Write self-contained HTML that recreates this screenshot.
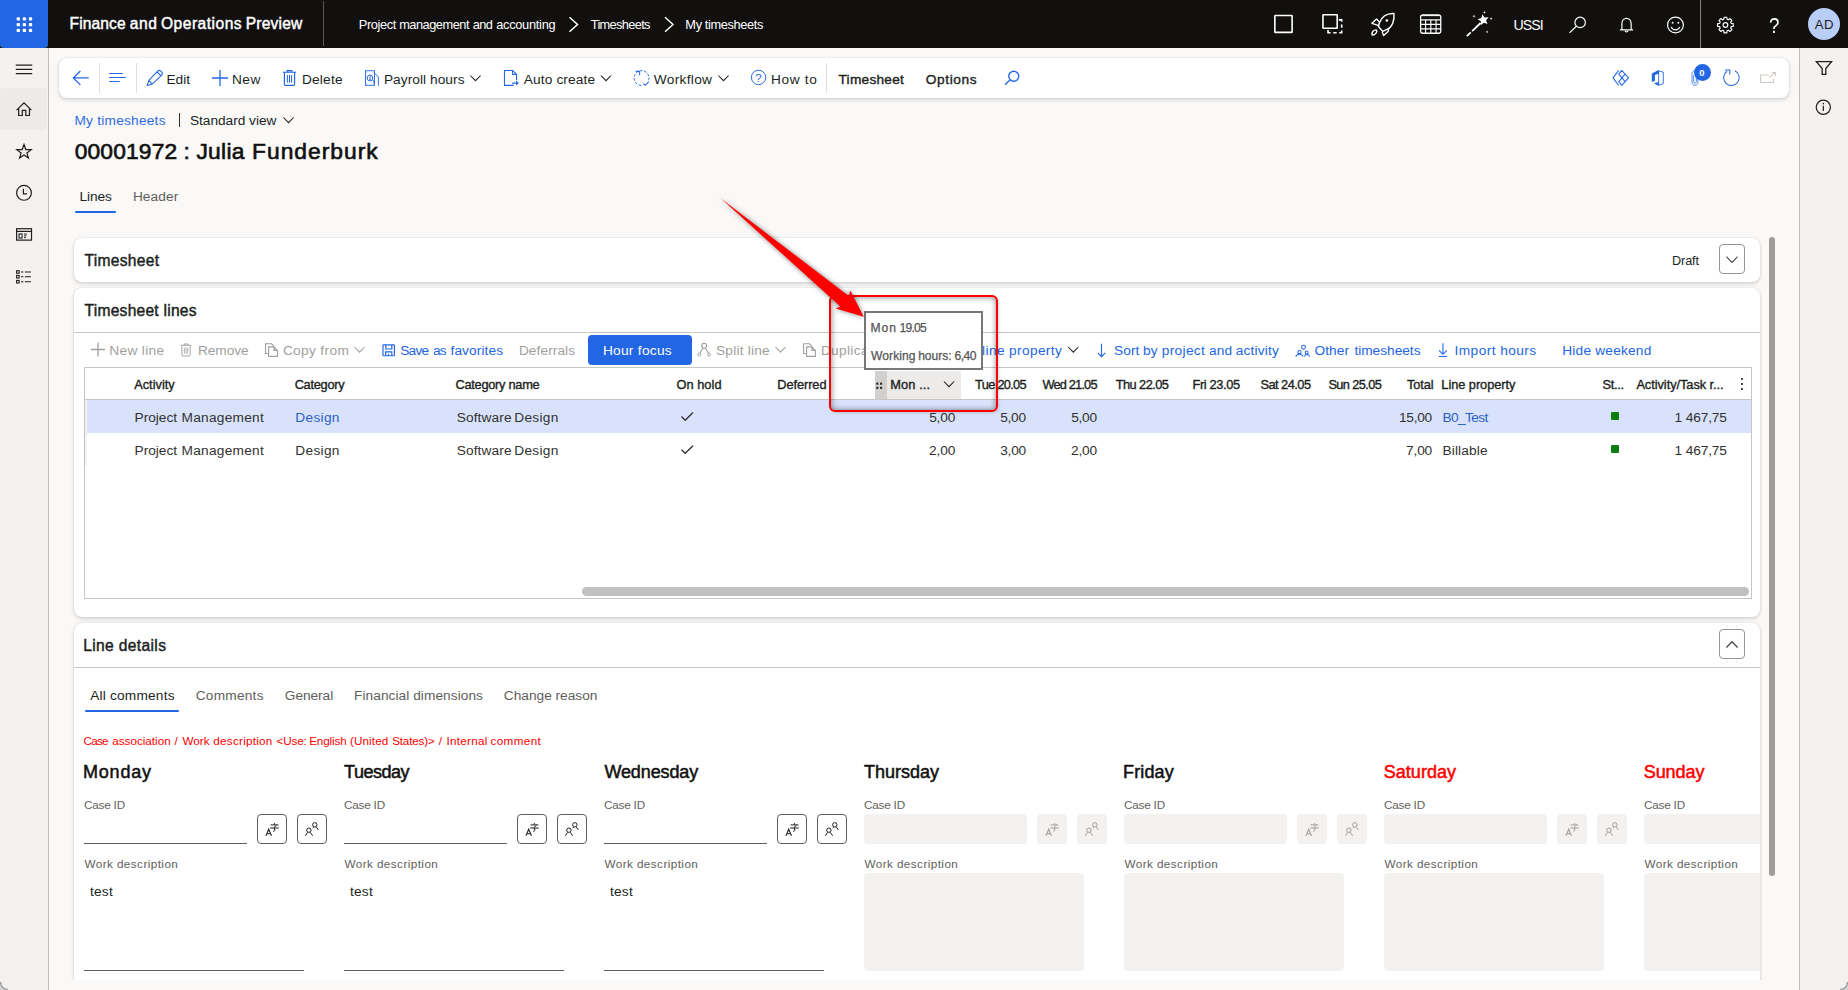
<!DOCTYPE html>
<html lang="en">
<head>
<meta charset="utf-8">
<title>My timesheets - Finance and Operations Preview</title>
<style>
html,body{margin:0;padding:0}
body{width:1848px;height:990px;position:relative;overflow:hidden;background:#faf9f8;font-family:"Liberation Sans",sans-serif;color:#201f1e}
.t{position:absolute;white-space:pre;line-height:normal;margin:0;padding:0;font-weight:400}
.b{position:absolute;box-sizing:border-box}
svg{position:absolute;overflow:visible}
.card{position:absolute;background:#fff;border-radius:8px;box-shadow:0 0 2px rgba(0,0,0,.12),0 2px 4px rgba(0,0,0,.14)}
.w{display:contents;margin:0;padding:0}
.w7{font-weight:700}
.q{transform:scaleX(.86);transform-origin:0 0}
.tt{-webkit-text-stroke:0.25px #555}
h1,h2,h3,p,ul,li,button,a{font:inherit;color:inherit;text-decoration:none}
</style>
</head>
<body>
<header>
<div class="b" style="left:0px;top:0px;width:1848px;height:48px;background:#11100f"></div>
<div class="b" style="left:0px;top:0px;width:48px;height:48px;background:#2266e3;border-radius:0 0 4px 4px"></div>
<svg style="left:0px;top:0px;" width="48" height="48" viewBox="0 0 48 48" fill="none"><rect x="16.65" y="17.25" width="3.3" height="3.3" rx="0.9" fill="#fff"/><rect x="22.75" y="17.25" width="3.3" height="3.3" rx="0.9" fill="#fff"/><rect x="28.85" y="17.25" width="3.3" height="3.3" rx="0.9" fill="#fff"/><rect x="16.65" y="23" width="3.3" height="3.3" rx="0.9" fill="#fff"/><rect x="22.75" y="23" width="3.3" height="3.3" rx="0.9" fill="#fff"/><rect x="28.85" y="23" width="3.3" height="3.3" rx="0.9" fill="#fff"/><rect x="16.65" y="28.75" width="3.3" height="3.3" rx="0.9" fill="#fff"/><rect x="22.75" y="28.75" width="3.3" height="3.3" rx="0.9" fill="#fff"/><rect x="28.85" y="28.75" width="3.3" height="3.3" rx="0.9" fill="#fff"/></svg>
<div class="w"><span class="t" style="left:69.52px;top:14.90px;font-size:15.6px;color:#fff;letter-spacing:0.115px;-webkit-text-stroke:0.44px;">Finance</span> <span class="t" style="left:129.74px;top:14.90px;font-size:15.6px;color:#fff;letter-spacing:0.618px;-webkit-text-stroke:0.44px;">and</span> <span class="t" style="left:160.96px;top:14.90px;font-size:15.6px;color:#fff;letter-spacing:0.491px;-webkit-text-stroke:0.44px;">Operations</span> <span class="t" style="left:245.72px;top:14.90px;font-size:15.6px;color:#fff;letter-spacing:0.195px;-webkit-text-stroke:0.44px;">Preview</span></div>
<div class="b" style="left:323px;top:1px;width:1px;height:45px;background:#5a5958"></div>
<nav>
<a class="w"><span class="t" style="left:358.75px;top:16.70px;font-size:12.8px;color:#fff;letter-spacing:-0.381px;">Project</span> <span class="t" style="left:399.15px;top:16.70px;font-size:12.8px;color:#fff;letter-spacing:-0.484px;">management</span> <span class="t" style="left:472.66px;top:16.70px;font-size:12.8px;color:#fff;letter-spacing:-0.595px;">and</span> <span class="t" style="left:496.16px;top:16.70px;font-size:12.8px;color:#fff;letter-spacing:-0.271px;">accounting</span></a>
<svg style="left:568px;top:16px;" width="11" height="17" viewBox="0 0 11 17" fill="none"><g transform="translate(0.50 0.50)"><path d="M1 0.8 L9 8 L1 15.2" stroke="#fff" stroke-width="1.5"/></g></svg>
<span class="t" style="left:590.71px;top:16.70px;font-size:12.8px;color:#fff;letter-spacing:-0.658px;">Timesheets</span>
<svg style="left:664px;top:16px;" width="10" height="17" viewBox="0 0 10 17" fill="none"><g transform="translate(0.00 0.50)"><path d="M1 0.8 L9 8 L1 15.2" stroke="#fff" stroke-width="1.5"/></g></svg>
<span class="t" style="left:685.35px;top:16.70px;font-size:12.8px;color:#fff;letter-spacing:-0.366px;">My timesheets</span>
</nav>
<svg style="left:1273px;top:14px;" width="21" height="20" viewBox="171.60 118.80 277.20 264.00" fill="none"><rect x="196" y="139" width="228" height="222" rx="6" stroke="#fff" stroke-width="21"/></svg>
<svg style="left:1321px;top:13px;" width="23" height="22" viewBox="805.20 105.60 303.60 290.40" fill="none"><rect x="831" y="129" width="188" height="178" rx="6" stroke="#fff" stroke-width="21"/><path d="M1040 196 H1078 V222 M1078 258 V300 M1078 338 V367 H1046 M1012 367 H966 M932 367 H898 V330" stroke="#fff" stroke-width="21"/></svg>
<svg style="left:1370px;top:12px;" width="25" height="25" viewBox="132.00 92.40 330.00 330.00" fill="none"><path d="M448 112 C350 106 282 162 256 236 L243 284 L300 348 L350 324 C428 292 458 202 448 112 Z" stroke="#fff" stroke-width="19" stroke-linejoin="round"/><path d="M262 232 L218 186 L157 242 L240 270" stroke="#fff" stroke-width="18" stroke-linejoin="round"/><path d="M380 300 L374 346 L312 402 L292 352" stroke="#fff" stroke-width="18" stroke-linejoin="round"/><path d="M160 398 C150 358 180 326 216 328 C236 352 206 394 160 398 Z" stroke="#fff" stroke-width="18" stroke-linejoin="round"/><circle cx="355" cy="205" r="17" fill="#fff"/></svg>
<svg style="left:1419px;top:13px;" width="24" height="22" viewBox="778.80 105.60 316.80 290.40" fill="none"><rect x="800" y="129" width="266" height="244" rx="30" stroke="#fff" stroke-width="17"/><path d="M800 196 H1066 M800 256 H1066 M800 316 H1066 M866 196 V373 M935 196 V373 M1004 196 V373" stroke="#fff" stroke-width="15"/><path d="M812 140 H1054" stroke="#fff" stroke-width="14"/></svg>
<svg style="left:1465px;top:10px;" width="30" height="28" viewBox="1386.00 66.00 396.00 369.60" fill="none"><path d="M1410 410 L1462 361 M1480 344 L1592 238" stroke="#fff" stroke-width="24"/><polygon points="1614.5,121.2 1643.8,165.6 1696.9,161.4 1663.6,203.0 1684.1,252.2 1634.3,233.5 1593.8,268.1 1596.2,214.9 1550.8,187.1 1602.1,173.0" fill="#fff"/><polygon points="1643.0,76.0 1648.0,93.0 1665.0,98.0 1648.0,103.0 1643.0,120.0 1638.0,103.0 1621.0,98.0 1638.0,93.0" fill="#fff"/><polygon points="1505.0,126.0 1510.0,143.0 1527.0,148.0 1510.0,153.0 1505.0,170.0 1500.0,153.0 1483.0,148.0 1500.0,143.0" fill="#fff"/><polygon points="1730.0,159.0 1735.0,176.0 1752.0,181.0 1735.0,186.0 1730.0,203.0 1725.0,186.0 1708.0,181.0 1725.0,176.0" fill="#fff"/><polygon points="1678.0,335.0 1682.5,350.5 1698.0,355.0 1682.5,359.5 1678.0,375.0 1673.5,359.5 1658.0,355.0 1673.5,350.5" fill="#fff"/></svg>
<span class="t" style="left:1513.39px;top:17.00px;font-size:14.2px;color:#fff;letter-spacing:-0.900px;">USSI</span>
<svg style="left:1567px;top:15px;" width="21" height="20" viewBox="106.99 87.53 204.25 194.52" fill="none"><circle cx="235" cy="160" r="51" stroke="#fff" stroke-width="11.5"/><path d="M198 197 L131 262" stroke="#fff" stroke-width="11.5"/></svg>
<svg style="left:1618px;top:16px;" width="17" height="18" viewBox="603.01 97.26 165.34 175.07" fill="none"><path d="M622 232 H750 M641 232 V172 C641 102 731 102 731 172 V232" stroke="#fff" stroke-width="11.5"/><path d="M671 240 C673 256 699 256 701 240" stroke="#fff" stroke-width="10"/></svg>
<svg style="left:1666px;top:15px;" width="20" height="20" viewBox="1069.86 87.53 194.52 194.52" fill="none"><circle cx="1162" cy="185" r="77" stroke="#fff" stroke-width="11.5"/><circle cx="1134" cy="163" r="9" fill="#fff"/><circle cx="1190" cy="163" r="9" fill="#fff"/><path d="M1120 203 C1136 242 1189 242 1205 203" stroke="#fff" stroke-width="11"/></svg>
<div class="b" style="left:1700px;top:0px;width:1px;height:48px;background:#858381"></div>
<svg style="left:1715px;top:15px;" width="21" height="20" viewBox="1546.43 87.53 204.25 194.52" fill="none"><polygon points="1703.8,169.0 1723.8,171.6 1723.8,198.4 1703.8,201.0 1698.7,213.1 1711.1,229.2 1692.2,248.1 1676.1,235.7 1664.0,240.8 1661.4,260.8 1634.6,260.8 1632.0,240.8 1619.9,235.7 1603.8,248.1 1584.9,229.2 1597.3,213.1 1592.2,201.0 1572.2,198.4 1572.2,171.6 1592.2,169.0 1597.3,156.9 1584.9,140.8 1603.8,121.9 1619.9,134.3 1632.0,129.2 1634.6,109.2 1661.4,109.2 1664.0,129.2 1676.1,134.3 1692.2,121.9 1711.1,140.8 1698.7,156.9" stroke="#fff" stroke-width="11" stroke-linejoin="round"/><circle cx="1648" cy="185" r="23" stroke="#fff" stroke-width="11"/></svg>
<span class="t q" style="left:1768.91px;top:12.90px;font-size:21.8px;color:#fff;">?</span>
<div class="b" style="left:1808px;top:8px;width:32px;height:32px;background:#b9cef6;border-radius:50%"></div>
<span class="t" style="left:1814.77px;top:16.50px;font-size:13.2px;color:#1b1a19;letter-spacing:0.529px;">AD</span>
</header>
<aside>
<div class="b" style="left:0px;top:48px;width:49px;height:942px;background:#f3f2f1;border-right:1px solid #bebcba"></div>
<div class="b" style="left:0px;top:88px;width:47px;height:42px;background:#edebe9;border-radius:4px"></div>
<svg style="left:15px;top:64px;" width="18" height="11" viewBox="90.75 99.00 148.50 90.75" fill="none"><path d="M97 108 H233 M97 143 H233 M97 178 H233" stroke="#201f1e" stroke-width="10"/></svg>
<svg style="left:15px;top:101px;" width="18" height="16" viewBox="90.75 404.25 148.50 132.00" fill="none"><path d="M104 480 L165 420 L226 480 M121 466 V524 H151 V482 H180 V524 H210 V466" stroke="#201f1e" stroke-width="10" stroke-linejoin="miter"/></svg>
<svg style="left:15px;top:142px;" width="18" height="18" viewBox="90.75 742.50 148.50 148.50" fill="none"><polygon points="165.0,763.0 179.7,804.8 224.0,805.8 188.8,832.7 201.4,875.2 165.0,850.0 128.6,875.2 141.2,832.7 106.0,805.8 150.3,804.8" stroke="#201f1e" stroke-width="10" stroke-linejoin="miter"/></svg>
<svg style="left:15px;top:184px;" width="18" height="18" viewBox="90.75 99.00 148.50 148.50" fill="none"><circle cx="165" cy="172" r="61" stroke="#201f1e" stroke-width="10"/><path d="M160 138 V181 H190" stroke="#201f1e" stroke-width="10"/></svg>
<svg style="left:15px;top:227px;" width="18" height="15" viewBox="90.75 453.75 148.50 123.75" fill="none"><rect x="104" y="468" width="123" height="94" stroke="#201f1e" stroke-width="10"/><path d="M104 490 H227" stroke="#201f1e" stroke-width="10"/><rect x="124" y="511" width="25" height="34" stroke="#201f1e" stroke-width="9"/><path d="M165 512 H190 M165 527 H185 M165 541 H180" stroke="#201f1e" stroke-width="8"/></svg>
<svg style="left:15px;top:269px;" width="18" height="16" viewBox="90.75 800.25 148.50 132.00" fill="none"><rect x="104" y="814.5" width="21" height="21" stroke="#201f1e" stroke-width="9"/><path d="M140 825 H160 M172 825 H222" stroke="#201f1e" stroke-width="9"/><rect x="104" y="853.5" width="21" height="21" stroke="#201f1e" stroke-width="9"/><path d="M140 864 H160 M172 864 H222" stroke="#201f1e" stroke-width="9"/><rect x="104" y="894.5" width="21" height="21" stroke="#201f1e" stroke-width="9"/><path d="M140 905 H160 M172 905 H222" stroke="#201f1e" stroke-width="9"/></svg>
</aside>
<aside>
<div class="b" style="left:1799px;top:48px;width:49px;height:942px;background:#f3f2f1;border-left:1px solid #bebcba"></div>
<svg style="left:1814px;top:59px;" width="20" height="18" viewBox="1613.66 62.06 137.92 124.13" fill="none"><path d="M1630 80 H1735 L1695 128 V168 H1670 V128 Z" stroke="#201f1e" stroke-width="9" stroke-linejoin="miter"/></svg>
<svg style="left:1814px;top:98px;" width="20" height="18" viewBox="1613.66 331.01 137.92 124.13" fill="none"><circle cx="1678" cy="395" r="49" stroke="#201f1e" stroke-width="8.5"/><path d="M1678 385 V420" stroke="#201f1e" stroke-width="8.5"/><circle cx="1678" cy="370" r="5.5" fill="#201f1e"/></svg>
</aside>
<section>
<div class="card" style="left:59px;top:58px;width:1730px;height:40px;"></div>
<svg style="left:71px;top:70px;" width="19" height="16" viewBox="92.40 132.00 250.80 211.20" fill="none"><path d="M326 237 H122 M216 146 L124 237 L216 328" stroke="#2266e3" stroke-width="17"/></svg>
<div class="b" style="left:99px;top:63px;width:1px;height:30px;background:#e1dfdd"></div>
<svg style="left:108px;top:72px;" width="19" height="11" viewBox="580.80 158.40 250.80 145.20" fill="none"><path d="M597 178 H776 M597 231 H816 M597 284 H736" stroke="#2266e3" stroke-width="13"/></svg>
<div class="b" style="left:136px;top:63px;width:1px;height:30px;background:#e1dfdd"></div>
<svg style="left:145px;top:69px;" width="19" height="18" viewBox="1069.20 118.80 250.80 237.60" fill="none"><path d="M1120 268 L1236 146 C1262 120 1318 168 1290 200 L1164 318 L1098 336 Z M1120 268 L1164 318 M1228 156 L1282 208" stroke="#2266e3" stroke-width="14" stroke-linejoin="round"/></svg>
<span class="t" style="left:166.38px;top:71.80px;font-size:13.7px;color:#201f1e;letter-spacing:0.043px;">Edit</span>
<svg style="left:212px;top:70px;" width="16" height="16" viewBox="0 0 16 16" fill="none"><path d="M0 8 H16 M8 0 V16" stroke="#2266e3" stroke-width="1.3"/></svg>
<span class="t" style="left:231.88px;top:71.80px;font-size:13.7px;color:#201f1e;letter-spacing:0.600px;">New</span>
<svg style="left:283px;top:70px;" width="13" height="16" viewBox="0.00 0.00 13.00 16.00" fill="none"><path d="M0 2.2 H13 M4.2 2 V0.6 H8.8 V2 M1.4 2.4 V14.2 Q1.4 15.4 2.6 15.4 H10.4 Q11.6 15.4 11.6 14.2 V2.4" stroke="#2266e3" stroke-width="1.15"/><path d="M4.4 5 V12.6 M6.5 5 V12.6 M8.6 5 V12.6" stroke="#2266e3" stroke-width="1"/></svg>
<span class="t" style="left:301.88px;top:71.80px;font-size:13.7px;color:#201f1e;letter-spacing:0.231px;">Delete</span>
<svg style="left:364px;top:69px;" width="16" height="18" viewBox="132.00 118.80 211.20 237.60" fill="none"><rect x="152" y="142" width="118" height="192" stroke="#2266e3" stroke-width="12"/><path d="M270 170 L322 226 V340" stroke="#2266e3" stroke-width="12"/><circle cx="211" cy="238" r="38" stroke="#2266e3" stroke-width="13"/><path d="M228 224 C204 214 198 238 212 240 C228 242 226 264 200 256 M250 262 C260 274 262 290 262 304" stroke="#2266e3" stroke-width="12"/><circle cx="170" cy="160" r="6" fill="#2266e3"/><circle cx="252" cy="160" r="6" fill="#2266e3"/><circle cx="170" cy="316" r="6" fill="#2266e3"/><circle cx="252" cy="316" r="6" fill="#2266e3"/></svg>
<span class="t" style="left:383.88px;top:71.80px;font-size:13.7px;color:#201f1e;letter-spacing:0.061px;">Payroll hours</span>
<svg style="left:470px;top:75px;" width="11" height="7" viewBox="0 0 11 7" fill="none"><path d="M0.4 0.5 L5.5 5.72 L10.6 0.5" stroke="#201f1e" stroke-width="1.05"/></svg>
<svg style="left:503px;top:69px;" width="17" height="18" viewBox="118.80 118.80 224.40 237.60" fill="none"><path d="M262 335 H138 V138 H246 L298 190 V268 M246 138 V190 H298" stroke="#2266e3" stroke-width="14" stroke-linejoin="round"/><path d="M238 305 H318 M290 278 L318 305 L290 332" stroke="#2266e3" stroke-width="14"/></svg>
<span class="t" style="left:523.77px;top:71.80px;font-size:13.7px;color:#201f1e;letter-spacing:0.132px;">Auto create</span>
<svg style="left:600px;top:75px;" width="12" height="7" viewBox="0 0 12 7" fill="none"><g transform="translate(0.50 0.00)"><path d="M0.4 0.5 L5.5 5.72 L10.6 0.5" stroke="#201f1e" stroke-width="1.05"/></g></svg>
<svg style="left:632px;top:69px;" width="19" height="18" viewBox="79.20 118.80 250.80 237.60" fill="none"><circle cx="205" cy="238" r="98" stroke="#2266e3" stroke-width="13" stroke-dasharray="34 22" stroke-dashoffset="10"/><path d="M128 150 H180 V200" stroke="#2266e3" stroke-width="14"/><rect x="215" y="270" width="100" height="75" fill="#fff"/><path d="M228 312 L254 334 L302 284" stroke="#2266e3" stroke-width="14"/></svg>
<span class="t" style="left:653.74px;top:71.80px;font-size:13.7px;color:#201f1e;letter-spacing:0.314px;">Workflow</span>
<svg style="left:718px;top:75px;" width="11" height="7" viewBox="0 0 11 7" fill="none"><path d="M0.4 0.5 L5.5 5.72 L10.6 0.5" stroke="#201f1e" stroke-width="1.05"/></svg>
<svg style="left:750px;top:69px;" width="17" height="17" viewBox="132.00 118.80 224.40 224.40" fill="none"><circle cx="245" cy="230" r="95" stroke="#2266e3" stroke-width="13"/></svg><span class="t" style="left:755.13px;top:72.20px;font-size:11.5px;color:#2266e3;">?</span>
<span class="t" style="left:770.88px;top:71.80px;font-size:13.7px;color:#201f1e;letter-spacing:0.658px;">How to</span>
<div class="b" style="left:826px;top:63px;width:1px;height:30px;background:#e1dfdd"></div>
<span class="t" style="left:838.49px;top:71.80px;font-size:13.7px;color:#201f1e;letter-spacing:0.250px;-webkit-text-stroke:0.38px;">Timesheet</span>
<span class="t" style="left:925.65px;top:71.80px;font-size:13.7px;color:#201f1e;letter-spacing:0.645px;-webkit-text-stroke:0.38px;">Options</span>
<svg style="left:1003px;top:70px;" width="18" height="16" viewBox="292.00 80.00 72.00 64.00" fill="none"><circle cx="335" cy="105" r="20" stroke="#2266e3" stroke-width="5.5"/><path d="M320 120 L300 139" stroke="#2266e3" stroke-width="5.5"/></svg>
<svg style="left:1611px;top:69px;" width="19" height="18" viewBox="132.00 132.00 501.60 475.20" fill="none"><path d="M336 168 L184 366 L336 566" stroke="#2266e3" stroke-width="27" stroke-linejoin="round"/><path d="M415 168 L596 366 L415 566 L338 466 L506 266 M415 168 L338 266 L506 466" stroke="#2266e3" stroke-width="27" stroke-linejoin="round"/></svg>
<svg style="left:1651px;top:69px;" width="14" height="18" viewBox="1188.00 132.00 369.60 475.20" fill="none"><path d="M1210 250 L1372 166 L1400 178 V252 L1292 292 V442 L1210 472 Z" fill="#2266e3"/><path d="M1262 506 L1388 478 V574 Z" fill="#2266e3"/><path d="M1390 178 V570 M1392 182 L1512 216 V520 L1392 562" stroke="#2266e3" stroke-width="24" stroke-linejoin="round"/></svg>
<svg style="left:1690px;top:69px;" width="10" height="18" viewBox="875.34 87.53 97.26 175.07" fill="none"><path d="M952 150 V215 C952 257 895 257 895 215 V135 C895 97 937 97 937 135 V208 C937 230 911 230 911 208 V150" stroke="#2266e3" stroke-width="7.5"/></svg>
<div class="b" style="left:1694px;top:63.9px;width:17px;height:17px;background:#2266e3;border-radius:50%"></div>
<span class="t w7" style="left:1699.13px;top:66.60px;font-size:9.5px;color:#fff;">0</span>
<svg style="left:1722px;top:68px;" width="19" height="19" viewBox="1186.57 77.81 184.79 184.79" fill="none"><path d="M1312 104 A76 76 0 1 1 1236 109" stroke="#2266e3" stroke-width="10"/><path d="M1216 98 H1262 V140" stroke="#2266e3" stroke-width="10"/></svg>
<svg style="left:1759px;top:70px;" width="18" height="14" viewBox="1546.43 97.26 175.07 136.16" fill="none"><path d="M1640 145 H1562 V218 H1688 V185" stroke="#cfc9c3" stroke-width="10"/><path d="M1648 170 L1702 126 M1668 122 H1706 V160" stroke="#cfc9c3" stroke-width="10"/></svg>
</section>
<section>
<a class="t" style="left:74.48px;top:113.00px;font-size:13.7px;color:#2f6ae0;letter-spacing:0.232px;">My timesheets</a>
<div class="b" style="left:178.5px;top:113px;width:1px;height:14px;background:#323130"></div>
<span class="t" style="left:189.88px;top:113.00px;font-size:13.7px;color:#201f1e;letter-spacing:-0.013px;">Standard view</span>
<svg style="left:283px;top:117px;" width="11" height="7" viewBox="0 0 11 7" fill="none"><path d="M0.4 0.5 L5.5 5.72 L10.6 0.5" stroke="#201f1e" stroke-width="1.05"/></svg>
<h1 class="w"><span class="t" style="left:74.71px;top:138.20px;font-size:22.8px;color:#11100f;letter-spacing:0.143px;-webkit-text-stroke:0.64px;">00001972</span> <span class="t" style="left:183.42px;top:138.20px;font-size:22.8px;color:#11100f;-webkit-text-stroke:0.64px;">:</span> <span class="t" style="left:196.44px;top:138.20px;font-size:22.8px;color:#11100f;letter-spacing:0.266px;-webkit-text-stroke:0.64px;">Julia</span> <span class="t" style="left:252.03px;top:138.20px;font-size:22.8px;color:#11100f;letter-spacing:1.007px;-webkit-text-stroke:0.64px;">Funderburk</span></h1>
<span class="t" style="left:79.48px;top:188.60px;font-size:13.7px;color:#201f1e;letter-spacing:-0.104px;">Lines</span>
<div class="b" style="left:75px;top:210.5px;width:41px;height:2.5px;background:#2266e3;border-radius:2px"></div>
<span class="t" style="left:132.88px;top:188.60px;font-size:13.7px;color:#605e5c;letter-spacing:0.089px;">Header</span>
</section>
<main>
<div class="b" style="left:1769px;top:237px;width:6px;height:639px;background:#9f9e9d;border-radius:3px"></div>
<div class="card" style="left:74px;top:238px;width:1686px;height:44px;"></div>
<h2 class="t" style="left:84.55px;top:251.70px;font-size:15.6px;color:#201f1e;letter-spacing:0.291px;-webkit-text-stroke:0.44px;">Timesheet</h2>
<span class="t" style="left:1671.96px;top:254.00px;font-size:12.7px;color:#201f1e;letter-spacing:-0.091px;">Draft</span>
<div class="b" style="left:1719px;top:244px;width:26px;height:30px;background:#fff;border:1px solid #979593;border-radius:4px"></div>
<svg style="left:1726px;top:256px;" width="12" height="8" viewBox="0 0 12 8" fill="none"><g transform="translate(0.00 0.20)"><path d="M0.4 0.5 L6 6.24 L11.6 0.5" stroke="#484644" stroke-width="1.05"/></g></svg>
<div class="card" style="left:74px;top:288px;width:1686px;height:329px;"></div>
<h2 class="t" style="left:84.55px;top:301.50px;font-size:15.6px;color:#201f1e;letter-spacing:0.242px;-webkit-text-stroke:0.44px;">Timesheet lines</h2>
<div class="b" style="left:74px;top:332px;width:1686px;height:1px;background:#c8c6c4"></div>
<svg style="left:91px;top:342px;" width="14" height="15" viewBox="0 0 14 15" fill="none"><g transform="translate(0.00 0.50)"><path d="M0 7 H14 M7 0 V14" stroke="#a19f9d" stroke-width="1.3"/></g></svg>
<span class="t" style="left:109.28px;top:342.90px;font-size:13.7px;color:#a19f9d;letter-spacing:0.333px;">New line</span>
<svg style="left:180px;top:343px;" width="12" height="14" viewBox="-0.99 -0.62 14.81 17.28" fill="none"><path d="M0 2.2 H13 M4.2 2 V0.6 H8.8 V2 M1.4 2.4 V14.2 Q1.4 15.4 2.6 15.4 H10.4 Q11.6 15.4 11.6 14.2 V2.4" stroke="#a19f9d" stroke-width="1.15"/><path d="M4.4 5 V12.6 M6.5 5 V12.6 M8.6 5 V12.6" stroke="#a19f9d" stroke-width="1"/></svg>
<span class="t" style="left:198.08px;top:342.90px;font-size:13.7px;color:#a19f9d;letter-spacing:-0.107px;">Remove</span>
<svg style="left:264px;top:342px;" width="15" height="16" viewBox="723.80 46.20 115.50 123.20" fill="none"><path d="M757 135 H736 V60 H782 L800 78" stroke="#a19f9d" stroke-width="8.5"/><path d="M759 84 H800 L827 111 V157 H759 Z M800 84 V111 H827" stroke="#a19f9d" stroke-width="8.5" stroke-linejoin="round"/></svg>
<span class="t" style="left:282.90px;top:342.90px;font-size:13.7px;color:#a19f9d;letter-spacing:0.345px;">Copy from</span>
<svg style="left:354px;top:346px;" width="11" height="8" viewBox="0 0 11 8" fill="none"><g transform="translate(0.00 0.50)"><path d="M0.4 0.5 L5.5 5.72 L10.6 0.5" stroke="#a19f9d" stroke-width="1.05"/></g></svg>
<svg style="left:381px;top:343px;" width="15" height="14" viewBox="1624.70 53.90 115.50 107.80" fill="none"><rect x="1640" y="68" width="88" height="84" rx="6" stroke="#2266e3" stroke-width="9"/><path d="M1662 70 V100 H1708 V70 M1660 150 V122 H1708 V150 M1682 136 V150" stroke="#2266e3" stroke-width="9"/></svg>
<span class="w"><span class="t" style="left:400.28px;top:342.90px;font-size:13.7px;color:#2266e3;letter-spacing:-0.791px;">Save</span> <span class="t" style="left:432.97px;top:342.90px;font-size:13.7px;color:#2266e3;letter-spacing:-0.900px;">as</span> <span class="t" style="left:450.51px;top:342.90px;font-size:13.7px;color:#2266e3;letter-spacing:0.094px;">favorites</span></span>
<span class="t" style="left:518.88px;top:342.90px;font-size:13.7px;color:#a19f9d;letter-spacing:0.086px;">Deferrals</span>
<div class="b" style="left:588px;top:335px;width:104px;height:30px;background:#2266e3;border-radius:4px"></div>
<span class="t" style="left:602.88px;top:342.70px;font-size:13.7px;color:#fff;letter-spacing:0.292px;">Hour focus</span>
<svg style="left:696px;top:342px;" width="16" height="15" viewBox="61.62 61.62 164.32 154.05" fill="none"><circle cx="145" cy="100" r="25" stroke="#a19f9d" stroke-width="11"/><path d="M133 123 L102 175 M157 123 L188 175" stroke="#a19f9d" stroke-width="11"/><circle cx="95" cy="190" r="15" stroke="#a19f9d" stroke-width="10"/><circle cx="195" cy="190" r="15" stroke="#a19f9d" stroke-width="10"/></svg>
<span class="t" style="left:715.98px;top:342.90px;font-size:13.7px;color:#a19f9d;letter-spacing:0.209px;">Split line</span>
<svg style="left:775px;top:346px;" width="11" height="8" viewBox="0 0 11 8" fill="none"><g transform="translate(0.00 0.50)"><path d="M0.4 0.5 L5.5 5.72 L10.6 0.5" stroke="#a19f9d" stroke-width="1.05"/></g></svg>
<svg style="left:802px;top:342px;" width="15" height="16" viewBox="723.80 46.20 115.50 123.20" fill="none"><path d="M757 135 H736 V60 H782 L800 78" stroke="#a19f9d" stroke-width="8.5"/><path d="M759 84 H800 L827 111 V157 H759 Z M800 84 V111 H827" stroke="#a19f9d" stroke-width="8.5" stroke-linejoin="round"/></svg>
<span class="t" style="left:820.88px;top:342.90px;font-size:13.7px;color:#a19f9d;letter-spacing:0.334px;">Duplicate</span>
<span class="t" style="left:931.94px;top:342.90px;font-size:13.7px;color:#2266e3;letter-spacing:-0.316px;">Update </span>
<span class="t" style="left:982.08px;top:342.90px;font-size:13.7px;color:#2266e3;letter-spacing:0.368px;">line property</span>
<svg style="left:1067px;top:346px;" width="12" height="8" viewBox="0 0 12 8" fill="none"><g transform="translate(0.80 0.50)"><path d="M0.4 0.5 L5.5 5.72 L10.6 0.5" stroke="#201f1e" stroke-width="1.05"/></g></svg>
<svg style="left:1096px;top:343px;" width="11" height="15" viewBox="255.89 49.76 78.19 106.62" fill="none"><path d="M295 55 V146 M268 120 L295 147 L322 120" stroke="#2266e3" stroke-width="8"/></svg>
<span class="w"><span class="t" style="left:1114.08px;top:342.90px;font-size:13.7px;color:#2266e3;letter-spacing:0.038px;">Sort</span> <span class="t" style="left:1143.02px;top:342.90px;font-size:13.7px;color:#2266e3;letter-spacing:0.141px;">by</span> <span class="t" style="left:1161.82px;top:342.90px;font-size:13.7px;color:#2266e3;letter-spacing:0.315px;">project</span> <span class="t" style="left:1209.02px;top:342.90px;font-size:13.7px;color:#2266e3;letter-spacing:0.111px;">and</span> <span class="t" style="left:1235.72px;top:342.90px;font-size:13.7px;color:#2266e3;letter-spacing:0.195px;">activity</span></span>
<svg style="left:1294px;top:344px;" width="17" height="14" viewBox="92.43 82.16 174.59 143.78" fill="none"><circle cx="190" cy="115" r="20" stroke="#2266e3" stroke-width="10.5"/><circle cx="148" cy="166" r="17" stroke="#2266e3" stroke-width="10.5"/><circle cx="222" cy="170" r="15" stroke="#2266e3" stroke-width="10.5"/><path d="M110 212 C122 178 174 178 186 212 M200 212 C206 184 246 184 252 212" stroke="#2266e3" stroke-width="10.5"/></svg>
<span class="w"><span class="t" style="left:1314.55px;top:342.90px;font-size:13.7px;color:#2266e3;letter-spacing:0.060px;">Other</span> <span class="t" style="left:1354.39px;top:342.90px;font-size:13.7px;color:#2266e3;letter-spacing:-0.009px;">timesheets</span></span>
<svg style="left:1437px;top:342px;" width="12" height="16" viewBox="1561.04 61.62 123.24 164.32" fill="none"><path d="M1622 75 V186 M1582 148 L1622 188 L1662 148 M1580 210 H1664" stroke="#2266e3" stroke-width="11"/></svg>
<span class="t" style="left:1454.54px;top:342.90px;font-size:13.7px;color:#2266e3;letter-spacing:0.438px;">Import hours</span>
<span class="t" style="left:1562.28px;top:342.90px;font-size:13.7px;color:#2266e3;letter-spacing:0.205px;">Hide weekend</span>
<div class="b" style="left:84px;top:367px;width:1668px;height:232px;border:1px solid #c8c6c4;background:#fff"></div>
<div class="b" style="left:85px;top:399px;width:1666px;height:1px;background:#c8c6c4"></div>
<div class="b" style="left:85px;top:400px;width:1666px;height:32.5px;background:#d8e3fb"></div>
<div class="b" style="left:85px;top:400px;width:2px;height:65.5px;background:#f3f2f1"></div>
<div class="b" style="left:875px;top:371px;width:11.5px;height:28px;background:#d2d0ce"></div>
<div class="b" style="left:886.5px;top:371px;width:74.5px;height:28px;background:#edebe9"></div>
<svg style="left:876px;top:382px;" width="7" height="8" viewBox="0 0 7 8" fill="none"><rect x="0.3" y="0.6" width="2" height="2.1" fill="#201f1e"/><rect x="4.1" y="0.6" width="2" height="2.1" fill="#201f1e"/><rect x="0.3" y="4.8" width="2" height="2.1" fill="#201f1e"/><rect x="4.1" y="4.8" width="2" height="2.1" fill="#201f1e"/></svg>
<span class="t" style="left:134.17px;top:376.90px;font-size:12.8px;color:#201f1e;-webkit-text-stroke:0.36px;">Activity</span>
<span class="t" style="left:294.65px;top:376.90px;font-size:12.8px;color:#201f1e;letter-spacing:-0.280px;-webkit-text-stroke:0.36px;">Category</span>
<span class="t" style="left:455.55px;top:376.90px;font-size:12.8px;color:#201f1e;letter-spacing:-0.282px;-webkit-text-stroke:0.36px;">Category name</span>
<span class="t" style="left:676.39px;top:376.90px;font-size:12.8px;color:#201f1e;letter-spacing:0.051px;-webkit-text-stroke:0.36px;">On hold</span>
<span class="t" style="left:777.25px;top:376.90px;font-size:12.8px;color:#201f1e;letter-spacing:-0.075px;-webkit-text-stroke:0.36px;">Deferred</span>
<span class="t" style="left:890.35px;top:376.90px;font-size:12.8px;color:#201f1e;letter-spacing:0.099px;-webkit-text-stroke:0.36px;">Mon ...</span>
<span class="t" style="left:975.11px;top:376.90px;font-size:12.8px;color:#201f1e;letter-spacing:-0.716px;-webkit-text-stroke:0.36px;">Tue 20.05</span>
<span class="t" style="left:1042.44px;top:376.90px;font-size:12.8px;color:#201f1e;letter-spacing:-0.822px;-webkit-text-stroke:0.36px;">Wed 21.05</span>
<span class="t" style="left:1115.71px;top:376.90px;font-size:12.8px;color:#201f1e;letter-spacing:-0.552px;-webkit-text-stroke:0.36px;">Thu 22.05</span>
<span class="t" style="left:1192.55px;top:376.90px;font-size:12.8px;color:#201f1e;letter-spacing:-0.379px;-webkit-text-stroke:0.36px;">Fri 23.05</span>
<span class="t" style="left:1260.42px;top:376.90px;font-size:12.8px;color:#201f1e;letter-spacing:-0.522px;-webkit-text-stroke:0.36px;">Sat 24.05</span>
<span class="t" style="left:1328.42px;top:376.90px;font-size:12.8px;color:#201f1e;letter-spacing:-0.618px;-webkit-text-stroke:0.36px;">Sun 25.05</span>
<span class="t" style="left:1407.01px;top:376.90px;font-size:12.8px;color:#201f1e;letter-spacing:-0.097px;-webkit-text-stroke:0.36px;">Total</span>
<span class="t" style="left:1441.35px;top:376.90px;font-size:12.8px;color:#201f1e;letter-spacing:-0.052px;-webkit-text-stroke:0.36px;">Line property</span>
<span class="t" style="left:1602.42px;top:376.90px;font-size:12.8px;color:#201f1e;letter-spacing:-0.254px;-webkit-text-stroke:0.36px;">St...</span>
<span class="t" style="left:1636.38px;top:376.90px;font-size:12.8px;color:#201f1e;letter-spacing:-0.052px;-webkit-text-stroke:0.36px;">Activity/Task r...</span>
<svg style="left:943px;top:381px;" width="12" height="7" viewBox="0 0 12 7" fill="none"><g transform="translate(0.50 0.00)"><path d="M0.4 0.5 L5.5 5.72 L10.6 0.5" stroke="#201f1e" stroke-width="1.05"/></g></svg>
<svg style="left:1740px;top:377px;" width="4" height="14" viewBox="0 0 4 14" fill="none"><circle cx="2" cy="2" r="1.05" fill="#201f1e"/><circle cx="2" cy="7" r="1.05" fill="#201f1e"/><circle cx="2" cy="12" r="1.05" fill="#201f1e"/></svg>
<span class="w"><span class="t" style="left:134.58px;top:409.70px;font-size:13.7px;color:#323130;letter-spacing:-0.014px;">Project</span> <span class="t" style="left:181.58px;top:409.70px;font-size:13.7px;color:#323130;letter-spacing:0.258px;">Management</span></span>
<span class="t" style="left:295.28px;top:409.70px;font-size:13.7px;color:#2b5fc4;letter-spacing:0.321px;">Design</span>
<span class="w"><span class="t" style="left:456.68px;top:409.70px;font-size:13.7px;color:#323130;letter-spacing:0.131px;">Software</span> <span class="t" style="left:514.18px;top:409.70px;font-size:13.7px;color:#323130;letter-spacing:0.321px;">Design</span></span>
<svg style="left:681px;top:412px;" width="13" height="9" viewBox="0 0 13 9" fill="none"><path d="M0.5 4.6 L4.2 8.2 L12 0.6" stroke="#323130" stroke-width="1.35"/></svg>
<span class="t" style="left:929.15px;top:409.70px;font-size:13.7px;color:#323130;letter-spacing:-0.152px;">5,00</span>
<span class="t" style="left:1000.15px;top:409.70px;font-size:13.7px;color:#323130;letter-spacing:-0.219px;">5,00</span>
<span class="t" style="left:1071.15px;top:409.70px;font-size:13.7px;color:#323130;letter-spacing:-0.219px;">5,00</span>
<span class="t" style="left:1398.96px;top:409.70px;font-size:13.7px;color:#323130;letter-spacing:-0.247px;">15,00</span>
<span class="t" style="left:1442.48px;top:409.70px;font-size:13.7px;color:#2b5fc4;letter-spacing:-0.624px;">B0_Test</span>
<div class="b" style="left:1610.6px;top:412px;width:8.6px;height:8.4px;background:#107c10;border-radius:1px"></div>
<span class="t" style="left:1674.46px;top:409.70px;font-size:13.7px;color:#323130;letter-spacing:-0.109px;">1 467,75</span>
<span class="w"><span class="t" style="left:134.58px;top:442.80px;font-size:13.7px;color:#323130;letter-spacing:-0.014px;">Project</span> <span class="t" style="left:181.58px;top:442.80px;font-size:13.7px;color:#323130;letter-spacing:0.258px;">Management</span></span>
<span class="t" style="left:295.28px;top:442.80px;font-size:13.7px;color:#323130;letter-spacing:0.321px;">Design</span>
<span class="w"><span class="t" style="left:456.68px;top:442.80px;font-size:13.7px;color:#323130;letter-spacing:0.131px;">Software</span> <span class="t" style="left:514.18px;top:442.80px;font-size:13.7px;color:#323130;letter-spacing:0.321px;">Design</span></span>
<svg style="left:681px;top:445px;" width="13" height="10" viewBox="0 0 13 10" fill="none"><g transform="translate(0.00 0.10)"><path d="M0.5 4.6 L4.2 8.2 L12 0.6" stroke="#323130" stroke-width="1.35"/></g></svg>
<span class="t" style="left:929.01px;top:442.80px;font-size:13.7px;color:#323130;letter-spacing:-0.105px;">2,00</span>
<span class="t" style="left:1000.18px;top:442.80px;font-size:13.7px;color:#323130;letter-spacing:-0.228px;">3,00</span>
<span class="t" style="left:1071.01px;top:442.80px;font-size:13.7px;color:#323130;letter-spacing:-0.172px;">2,00</span>
<span class="t" style="left:1406.10px;top:442.80px;font-size:13.7px;color:#323130;letter-spacing:-0.168px;">7,00</span>
<span class="t" style="left:1442.48px;top:442.80px;font-size:13.7px;color:#323130;letter-spacing:0.142px;">Billable</span>
<div class="b" style="left:1610.6px;top:445.1px;width:8.6px;height:8.4px;background:#107c10;border-radius:1px"></div>
<span class="t" style="left:1674.46px;top:442.80px;font-size:13.7px;color:#323130;letter-spacing:-0.109px;">1 467,75</span>
<div class="b" style="left:582px;top:587px;width:1167px;height:9px;background:#c1c1c1;border-radius:5px"></div>
<div class="card" style="left:74px;top:623px;width:1686px;height:380px;border-radius:8px 8px 0 0"></div>
<h2 class="t" style="left:83.22px;top:637.20px;font-size:15.6px;color:#201f1e;letter-spacing:0.350px;-webkit-text-stroke:0.44px;">Line details</h2>
<div class="b" style="left:74px;top:667px;width:1686px;height:1px;background:#c8c6c4"></div>
<div class="b" style="left:1719px;top:629px;width:26px;height:30px;background:#fff;border:1px solid #979593;border-radius:4px"></div>
<svg style="left:1726px;top:641px;" width="12" height="8" viewBox="0 0 12 8" fill="none"><path d="M0.4 6.44 L6 0.7 L11.6 6.44" stroke="#484644" stroke-width="1.25"/></svg>
<span class="t" style="left:90.27px;top:688.30px;font-size:13.7px;color:#201f1e;letter-spacing:0.188px;">All comments</span>
<div class="b" style="left:85px;top:709.7px;width:94px;height:2.6px;background:#2266e3;border-radius:2px"></div>
<span class="t" style="left:195.70px;top:688.30px;font-size:13.7px;color:#605e5c;letter-spacing:0.231px;">Comments</span>
<span class="t" style="left:284.81px;top:688.30px;font-size:13.7px;color:#605e5c;letter-spacing:-0.050px;">General</span>
<span class="t" style="left:354.08px;top:688.30px;font-size:13.7px;color:#605e5c;letter-spacing:0.053px;">Financial dimensions</span>
<span class="t" style="left:503.80px;top:688.30px;font-size:13.7px;color:#605e5c;">Change reason</span>
<p class="w"><span class="t" style="left:83.61px;top:733.90px;font-size:11.7px;color:#ff0000;letter-spacing:-0.828px;">Case</span> <span class="t" style="left:112.20px;top:733.90px;font-size:11.7px;color:#ff0000;">association</span> <span class="t" style="left:174.50px;top:733.90px;font-size:11.7px;color:#ff0000;">/</span> <span class="t" style="left:182.55px;top:733.90px;font-size:11.7px;color:#ff0000;letter-spacing:-0.009px;">Work</span> <span class="t" style="left:213.31px;top:733.90px;font-size:11.7px;color:#ff0000;letter-spacing:0.252px;">description</span> <span class="t" style="left:276.52px;top:733.90px;font-size:11.7px;color:#ff0000;letter-spacing:-0.154px;">&lt;Use:</span> <span class="t" style="left:309.14px;top:733.90px;font-size:11.7px;color:#ff0000;letter-spacing:-0.121px;">English</span> <span class="t" style="left:349.97px;top:733.90px;font-size:11.7px;color:#ff0000;letter-spacing:0.099px;">(United</span> <span class="t" style="left:392.17px;top:733.90px;font-size:11.7px;color:#ff0000;letter-spacing:-0.180px;">States)&gt;</span> <span class="t" style="left:438.70px;top:733.90px;font-size:11.7px;color:#ff0000;">/</span> <span class="t" style="left:446.42px;top:733.90px;font-size:11.7px;color:#ff0000;letter-spacing:0.297px;">Internal</span> <span class="t" style="left:490.50px;top:733.90px;font-size:11.7px;color:#ff0000;letter-spacing:0.384px;">comment</span></p>
<h3 class="t" style="left:83.02px;top:761.60px;font-size:18px;color:#11100f;letter-spacing:0.793px;-webkit-text-stroke:0.50px;">Monday</h3>
<span class="t" style="left:83.91px;top:798.20px;font-size:11.7px;color:#605e5c;letter-spacing:-0.163px;">Case ID</span>
<span class="t" style="left:84.45px;top:857.00px;font-size:11.7px;color:#605e5c;letter-spacing:0.439px;">Work description</span>
<div class="b" style="left:84px;top:842.6px;width:162.5px;height:1px;background:#605e5c"></div>
<div class="b" style="left:257px;top:814px;width:30px;height:30px;background:#fff;border:1px solid #605e5c;border-radius:4px"></div>
<div class="b" style="left:297px;top:814px;width:30px;height:30px;background:#fff;border:1px solid #605e5c;border-radius:4px"></div>
<svg style="left:257px;top:814px;" width="30" height="30" viewBox="0 0 30 30" fill="none"><path d="M8.9 21.9 L11.7 15.2 L14.5 21.9 M9.9 19.7 H13.5" stroke="#201f1e" stroke-width="1.1"/><path d="M13.6 10.9 H21.4 M13.2 14 H21.8 M17.4 9.1 V10.6 M19.6 11 L16.6 13.9 M17.7 14 V16.6 Q17.7 17.4 16.2 17.2" stroke="#201f1e" stroke-width="1"/></svg>
<svg style="left:297px;top:814px;" width="30" height="30" viewBox="0 0 30 30" fill="none"><circle cx="17.8" cy="10.8" r="2.2" stroke="#201f1e" stroke-width="1"/><path d="M15.9 14.2 L16.6 13.1 M19.3 13 L21.4 16" stroke="#201f1e" stroke-width="1"/><circle cx="11.9" cy="16.2" r="2.2" stroke="#201f1e" stroke-width="1"/><path d="M8.4 21.8 L10.5 18.4 M13.3 18.4 L15.6 21.8" stroke="#201f1e" stroke-width="1"/></svg>
<span class="t" style="left:90.09px;top:884.00px;font-size:13.7px;color:#201f1e;letter-spacing:0.182px;">test</span>
<div class="b" style="left:84px;top:970px;width:219.5px;height:1px;background:#605e5c"></div>
<h3 class="t" style="left:344.10px;top:761.60px;font-size:18px;color:#11100f;letter-spacing:-0.489px;-webkit-text-stroke:0.50px;">Tuesday</h3>
<span class="t" style="left:343.91px;top:798.20px;font-size:11.7px;color:#605e5c;letter-spacing:-0.163px;">Case ID</span>
<span class="t" style="left:344.45px;top:857.00px;font-size:11.7px;color:#605e5c;letter-spacing:0.439px;">Work description</span>
<div class="b" style="left:344px;top:842.6px;width:162.5px;height:1px;background:#605e5c"></div>
<div class="b" style="left:517px;top:814px;width:30px;height:30px;background:#fff;border:1px solid #605e5c;border-radius:4px"></div>
<div class="b" style="left:557px;top:814px;width:30px;height:30px;background:#fff;border:1px solid #605e5c;border-radius:4px"></div>
<svg style="left:517px;top:814px;" width="30" height="30" viewBox="0 0 30 30" fill="none"><path d="M8.9 21.9 L11.7 15.2 L14.5 21.9 M9.9 19.7 H13.5" stroke="#201f1e" stroke-width="1.1"/><path d="M13.6 10.9 H21.4 M13.2 14 H21.8 M17.4 9.1 V10.6 M19.6 11 L16.6 13.9 M17.7 14 V16.6 Q17.7 17.4 16.2 17.2" stroke="#201f1e" stroke-width="1"/></svg>
<svg style="left:557px;top:814px;" width="30" height="30" viewBox="0 0 30 30" fill="none"><circle cx="17.8" cy="10.8" r="2.2" stroke="#201f1e" stroke-width="1"/><path d="M15.9 14.2 L16.6 13.1 M19.3 13 L21.4 16" stroke="#201f1e" stroke-width="1"/><circle cx="11.9" cy="16.2" r="2.2" stroke="#201f1e" stroke-width="1"/><path d="M8.4 21.8 L10.5 18.4 M13.3 18.4 L15.6 21.8" stroke="#201f1e" stroke-width="1"/></svg>
<span class="t" style="left:350.09px;top:884.00px;font-size:13.7px;color:#201f1e;letter-spacing:0.182px;">test</span>
<div class="b" style="left:344px;top:970px;width:219.5px;height:1px;background:#605e5c"></div>
<h3 class="t" style="left:604.42px;top:761.60px;font-size:18px;color:#11100f;letter-spacing:-0.115px;-webkit-text-stroke:0.50px;">Wednesday</h3>
<span class="t" style="left:603.91px;top:798.20px;font-size:11.7px;color:#605e5c;letter-spacing:-0.163px;">Case ID</span>
<span class="t" style="left:604.45px;top:857.00px;font-size:11.7px;color:#605e5c;letter-spacing:0.439px;">Work description</span>
<div class="b" style="left:604px;top:842.6px;width:162.5px;height:1px;background:#605e5c"></div>
<div class="b" style="left:777px;top:814px;width:30px;height:30px;background:#fff;border:1px solid #605e5c;border-radius:4px"></div>
<div class="b" style="left:817px;top:814px;width:30px;height:30px;background:#fff;border:1px solid #605e5c;border-radius:4px"></div>
<svg style="left:777px;top:814px;" width="30" height="30" viewBox="0 0 30 30" fill="none"><path d="M8.9 21.9 L11.7 15.2 L14.5 21.9 M9.9 19.7 H13.5" stroke="#201f1e" stroke-width="1.1"/><path d="M13.6 10.9 H21.4 M13.2 14 H21.8 M17.4 9.1 V10.6 M19.6 11 L16.6 13.9 M17.7 14 V16.6 Q17.7 17.4 16.2 17.2" stroke="#201f1e" stroke-width="1"/></svg>
<svg style="left:817px;top:814px;" width="30" height="30" viewBox="0 0 30 30" fill="none"><circle cx="17.8" cy="10.8" r="2.2" stroke="#201f1e" stroke-width="1"/><path d="M15.9 14.2 L16.6 13.1 M19.3 13 L21.4 16" stroke="#201f1e" stroke-width="1"/><circle cx="11.9" cy="16.2" r="2.2" stroke="#201f1e" stroke-width="1"/><path d="M8.4 21.8 L10.5 18.4 M13.3 18.4 L15.6 21.8" stroke="#201f1e" stroke-width="1"/></svg>
<span class="t" style="left:610.09px;top:884.00px;font-size:13.7px;color:#201f1e;letter-spacing:0.182px;">test</span>
<div class="b" style="left:604px;top:970px;width:219.5px;height:1px;background:#605e5c"></div>
<h3 class="t" style="left:864.10px;top:761.60px;font-size:18px;color:#11100f;letter-spacing:-0.015px;-webkit-text-stroke:0.50px;">Thursday</h3>
<span class="t" style="left:863.91px;top:798.20px;font-size:11.7px;color:#605e5c;letter-spacing:-0.163px;">Case ID</span>
<span class="t" style="left:864.45px;top:857.00px;font-size:11.7px;color:#605e5c;letter-spacing:0.439px;">Work description</span>
<div class="b" style="left:864px;top:814px;width:163px;height:30px;background:#f3f2f1;border-radius:4px"></div>
<div class="b" style="left:1037px;top:814px;width:30px;height:30px;background:#f3f2f1;border-radius:4px"></div>
<div class="b" style="left:1077px;top:814px;width:30px;height:30px;background:#f3f2f1;border-radius:4px"></div>
<svg style="left:1037px;top:814px;" width="30" height="30" viewBox="0 0 30 30" fill="none"><path d="M8.9 21.9 L11.7 15.2 L14.5 21.9 M9.9 19.7 H13.5" stroke="#a19f9d" stroke-width="1.1"/><path d="M13.6 10.9 H21.4 M13.2 14 H21.8 M17.4 9.1 V10.6 M19.6 11 L16.6 13.9 M17.7 14 V16.6 Q17.7 17.4 16.2 17.2" stroke="#a19f9d" stroke-width="1"/></svg>
<svg style="left:1077px;top:814px;" width="30" height="30" viewBox="0 0 30 30" fill="none"><circle cx="17.8" cy="10.8" r="2.2" stroke="#a19f9d" stroke-width="1"/><path d="M15.9 14.2 L16.6 13.1 M19.3 13 L21.4 16" stroke="#a19f9d" stroke-width="1"/><circle cx="11.9" cy="16.2" r="2.2" stroke="#a19f9d" stroke-width="1"/><path d="M8.4 21.8 L10.5 18.4 M13.3 18.4 L15.6 21.8" stroke="#a19f9d" stroke-width="1"/></svg>
<div class="b" style="left:864px;top:873px;width:220px;height:98px;background:#f3f2f1;border-radius:4px"></div>
<h3 class="t" style="left:1123.02px;top:761.60px;font-size:18px;color:#11100f;letter-spacing:0.139px;-webkit-text-stroke:0.50px;">Friday</h3>
<span class="t" style="left:1123.91px;top:798.20px;font-size:11.7px;color:#605e5c;letter-spacing:-0.163px;">Case ID</span>
<span class="t" style="left:1124.45px;top:857.00px;font-size:11.7px;color:#605e5c;letter-spacing:0.439px;">Work description</span>
<div class="b" style="left:1124px;top:814px;width:163px;height:30px;background:#f3f2f1;border-radius:4px"></div>
<div class="b" style="left:1297px;top:814px;width:30px;height:30px;background:#f3f2f1;border-radius:4px"></div>
<div class="b" style="left:1337px;top:814px;width:30px;height:30px;background:#f3f2f1;border-radius:4px"></div>
<svg style="left:1297px;top:814px;" width="30" height="30" viewBox="0 0 30 30" fill="none"><path d="M8.9 21.9 L11.7 15.2 L14.5 21.9 M9.9 19.7 H13.5" stroke="#a19f9d" stroke-width="1.1"/><path d="M13.6 10.9 H21.4 M13.2 14 H21.8 M17.4 9.1 V10.6 M19.6 11 L16.6 13.9 M17.7 14 V16.6 Q17.7 17.4 16.2 17.2" stroke="#a19f9d" stroke-width="1"/></svg>
<svg style="left:1337px;top:814px;" width="30" height="30" viewBox="0 0 30 30" fill="none"><circle cx="17.8" cy="10.8" r="2.2" stroke="#a19f9d" stroke-width="1"/><path d="M15.9 14.2 L16.6 13.1 M19.3 13 L21.4 16" stroke="#a19f9d" stroke-width="1"/><circle cx="11.9" cy="16.2" r="2.2" stroke="#a19f9d" stroke-width="1"/><path d="M8.4 21.8 L10.5 18.4 M13.3 18.4 L15.6 21.8" stroke="#a19f9d" stroke-width="1"/></svg>
<div class="b" style="left:1124px;top:873px;width:220px;height:98px;background:#f3f2f1;border-radius:4px"></div>
<h3 class="t" style="left:1383.68px;top:761.60px;font-size:18px;color:#ff0000;letter-spacing:0.044px;-webkit-text-stroke:0.50px;">Saturday</h3>
<span class="t" style="left:1383.91px;top:798.20px;font-size:11.7px;color:#605e5c;letter-spacing:-0.163px;">Case ID</span>
<span class="t" style="left:1384.45px;top:857.00px;font-size:11.7px;color:#605e5c;letter-spacing:0.439px;">Work description</span>
<div class="b" style="left:1384px;top:814px;width:163px;height:30px;background:#f3f2f1;border-radius:4px"></div>
<div class="b" style="left:1557px;top:814px;width:30px;height:30px;background:#f3f2f1;border-radius:4px"></div>
<div class="b" style="left:1597px;top:814px;width:30px;height:30px;background:#f3f2f1;border-radius:4px"></div>
<svg style="left:1557px;top:814px;" width="30" height="30" viewBox="0 0 30 30" fill="none"><path d="M8.9 21.9 L11.7 15.2 L14.5 21.9 M9.9 19.7 H13.5" stroke="#a19f9d" stroke-width="1.1"/><path d="M13.6 10.9 H21.4 M13.2 14 H21.8 M17.4 9.1 V10.6 M19.6 11 L16.6 13.9 M17.7 14 V16.6 Q17.7 17.4 16.2 17.2" stroke="#a19f9d" stroke-width="1"/></svg>
<svg style="left:1597px;top:814px;" width="30" height="30" viewBox="0 0 30 30" fill="none"><circle cx="17.8" cy="10.8" r="2.2" stroke="#a19f9d" stroke-width="1"/><path d="M15.9 14.2 L16.6 13.1 M19.3 13 L21.4 16" stroke="#a19f9d" stroke-width="1"/><circle cx="11.9" cy="16.2" r="2.2" stroke="#a19f9d" stroke-width="1"/><path d="M8.4 21.8 L10.5 18.4 M13.3 18.4 L15.6 21.8" stroke="#a19f9d" stroke-width="1"/></svg>
<div class="b" style="left:1384px;top:873px;width:220px;height:98px;background:#f3f2f1;border-radius:4px"></div>
<h3 class="t" style="left:1643.68px;top:761.60px;font-size:18px;color:#ff0000;letter-spacing:-0.042px;-webkit-text-stroke:0.50px;">Sunday</h3>
<span class="t" style="left:1643.91px;top:798.20px;font-size:11.7px;color:#605e5c;letter-spacing:-0.163px;">Case ID</span>
<span class="t" style="left:1644.45px;top:857.00px;font-size:11.7px;color:#605e5c;letter-spacing:0.439px;">Work description</span>
<div class="b" style="left:1644px;top:814px;width:116px;height:30px;background:#f3f2f1;border-radius:4px 0 0 4px"></div>


<div class="b" style="left:1644px;top:873px;width:116px;height:98px;background:#f3f2f1;border-radius:4px 0 0 4px"></div>
<div class="b" style="left:49px;top:980px;width:1750px;height:10px;background:#faf9f8"></div>
</main>
<svg style="left:0px;top:982px;" width="8" height="8" viewBox="0 0 8 8" fill="none"><path d="M0 0 A8 8 0 0 0 8 8 H0 Z" fill="#d4d4d6"/><path d="M0.5 0 A7.5 7.5 0 0 0 8 7.5" stroke="#8f8f92" stroke-width="1.2"/></svg>
<svg style="left:1840px;top:982px;" width="8" height="8" viewBox="0 0 8 8" fill="none"><path d="M8 0 A8 8 0 0 1 0 8 H8 Z" fill="#d4d4d6"/><path d="M7.5 0 A7.5 7.5 0 0 1 0 7.5" stroke="#8f8f92" stroke-width="1.2"/></svg>
<div class="b" style="left:864px;top:311px;width:119px;height:59px;background:#fff;border:2px solid #777"></div>
<div class="w"><span class="t tt" style="left:870.41px;top:320.70px;font-size:12.1px;color:#555;letter-spacing:1.024px;">Mon</span> <span class="t tt" style="left:899.38px;top:320.70px;font-size:12.1px;color:#555;letter-spacing:-0.709px;">19.05</span></div>
<div class="w"><span class="t tt" style="left:871.05px;top:348.70px;font-size:12.1px;color:#555;letter-spacing:0.049px;">Working</span> <span class="t tt" style="left:918.16px;top:348.70px;font-size:12.1px;color:#555;letter-spacing:-0.016px;">hours:</span> <span class="t tt" style="left:954.39px;top:348.70px;font-size:12.1px;color:#555;letter-spacing:-0.453px;">6,40</span></div>
<div class="b" style="left:829.4px;top:295.4px;width:168.2px;height:116.6px;border:2px solid #ff0000;border-radius:6px;box-shadow:inset 1px 1px 6px rgba(0,0,0,.32),inset -1px -1px 5px rgba(0,0,0,.2),1px 1px 3px rgba(0,0,0,.15)"></div>
<svg style="left:0;top:0;filter:drop-shadow(0.5px 0.5px 2.5px rgba(0,0,0,.5))" width="1848" height="990" viewBox="0 0 1848 990"><polygon points="720.7,198.2 848.8,296.1 850.3,290.6 863.8,316.8 835.8,308.5 840.3,306.4" fill="#ff0000"/></svg>
</body>
</html>
